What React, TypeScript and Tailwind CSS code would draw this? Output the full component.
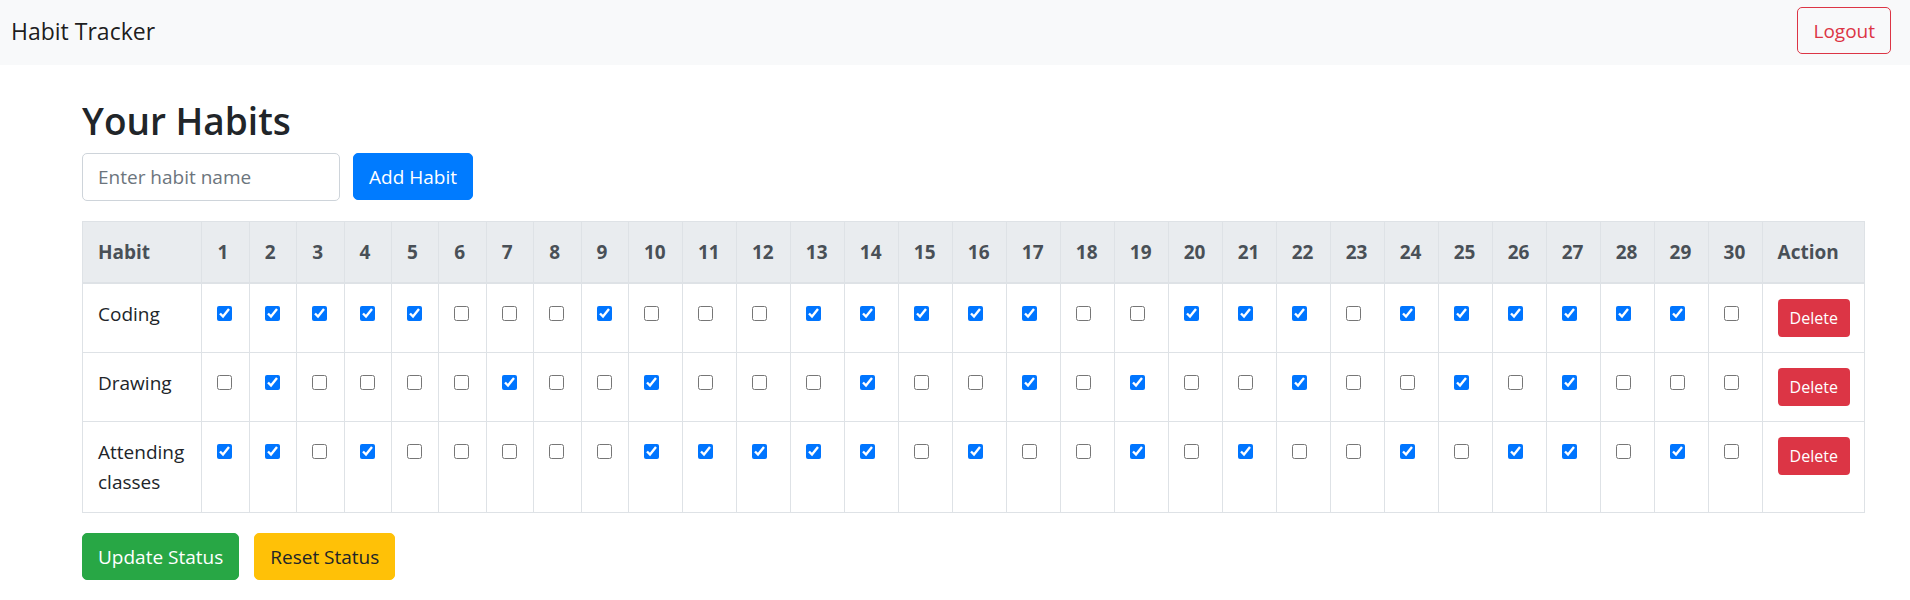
import { useState } from 'react';
import type { FormEvent } from 'react';

type Habit = { name: string; done: number[] };

const DAYS = Array.from({ length: 30 }, (_, i) => i + 1);

const INITIAL: Habit[] = [
  {
    name: 'Coding',
    done: [1, 2, 3, 4, 5, 9, 13, 14, 15, 16, 17, 20, 21, 22, 24, 25, 26, 27, 28, 29],
  },
  { name: 'Drawing', done: [2, 7, 10, 14, 17, 19, 22, 25, 27] },
  {
    name: 'Attending classes',
    done: [1, 2, 4, 10, 11, 12, 13, 14, 16, 19, 21, 24, 26, 27, 29],
  },
];

const CELL = 'border border-[#dee2e6] p-[15px]';
const BUTTON = 'h-[47px] cursor-pointer rounded-[5px] border px-[15px]';

export default function App() {
  const [habits, setHabits] = useState(INITIAL);
  const [name, setName] = useState('');

  const toggle = (row: number, day: number) =>
    setHabits(
      habits.map((habit, i) => {
        if (i !== row) return habit;
        const done = habit.done.includes(day)
          ? habit.done.filter((d) => d !== day)
          : [...habit.done, day];
        return { ...habit, done };
      }),
    );

  const addHabit = (event: FormEvent) => {
    event.preventDefault();
    if (!name.trim()) return;
    setHabits([...habits, { name: name.trim(), done: [] }]);
    setName('');
  };

  return (
    <div className="bg-white font-['Open_Sans','Noto_Sans',sans-serif] text-[19px] leading-[30px] text-[#212529]">
      <nav className="flex items-center justify-between bg-[#f8f9fa] pt-[7px] pr-[19px] pb-[11px] pl-[11px]">
        <a href="#" className="text-[23px] text-black/90">
          Habit Tracker
        </a>
        <button type="button" className={`${BUTTON} border-[#dc3545] text-[#dc3545]`}>
          Logout
        </button>
      </nav>

      <main className="pt-8 pr-[45px] pl-[82px]">
        <h2 className="text-[37px] leading-[48px] font-semibold">Your Habits</h2>

        <form onSubmit={addHabit} className="mt-2 flex gap-[13px]">
          <input
            type="text"
            aria-label="Habit name"
            placeholder="Enter habit name"
            value={name}
            onChange={(event) => setName(event.target.value)}
            className="h-12 w-[258px] rounded-[5px] border border-[#ced4da] px-[15px] placeholder:text-[#6c757d]"
          />
          <button type="submit" className={`${BUTTON} border-[#007bff] bg-[#007bff] text-white`}>
            Add Habit
          </button>
        </form>

        <table className="mt-5 w-full table-fixed border-collapse border border-[#dee2e6]">
          <colgroup>
            <col className="w-[6.7%]" />
            {DAYS.map((day) => (
              <col key={day} className={day < 10 ? 'w-[2.66%]' : 'w-[3.03%]'} />
            ))}
            <col />
          </colgroup>
          <thead className="bg-[#e9ecef] text-left text-[#495057]">
            <tr>
              <th className={`${CELL} border-b-2`}>Habit</th>
              {DAYS.map((day) => (
                <th key={day} className={`${CELL} border-b-2`}>
                  {day}
                </th>
              ))}
              <th className={`${CELL} border-b-2`}>Action</th>
            </tr>
          </thead>
          <tbody className="align-top">
            {habits.map((habit, row) => (
              <tr key={habit.name}>
                <td className={CELL}>{habit.name}</td>
                {DAYS.map((day) => (
                  <td key={day} className={CELL}>
                    <input
                      type="checkbox"
                      aria-label={`${habit.name}, day ${day}`}
                      checked={habit.done.includes(day)}
                      onChange={() => toggle(row, day)}
                      className="mt-[7px] block size-[15px]"
                    />
                  </td>
                ))}
                <td className={CELL}>
                  <button
                    type="button"
                    onClick={() => setHabits(habits.filter((_, i) => i !== row))}
                    className="block h-[38px] cursor-pointer rounded bg-[#dc3545] px-3 text-[16px] text-white"
                  >
                    Delete
                  </button>
                </td>
              </tr>
            ))}
          </tbody>
        </table>

        <div className="mt-5 flex gap-[15px]">
          <button type="button" className={`${BUTTON} border-[#28a745] bg-[#28a745] text-white`}>
            Update Status
          </button>
          <button
            type="button"
            onClick={() => setHabits(habits.map((habit) => ({ ...habit, done: [] })))}
            className={`${BUTTON} border-[#ffc107] bg-[#ffc107]`}
          >
            Reset Status
          </button>
        </div>
      </main>
    </div>
  );
}
